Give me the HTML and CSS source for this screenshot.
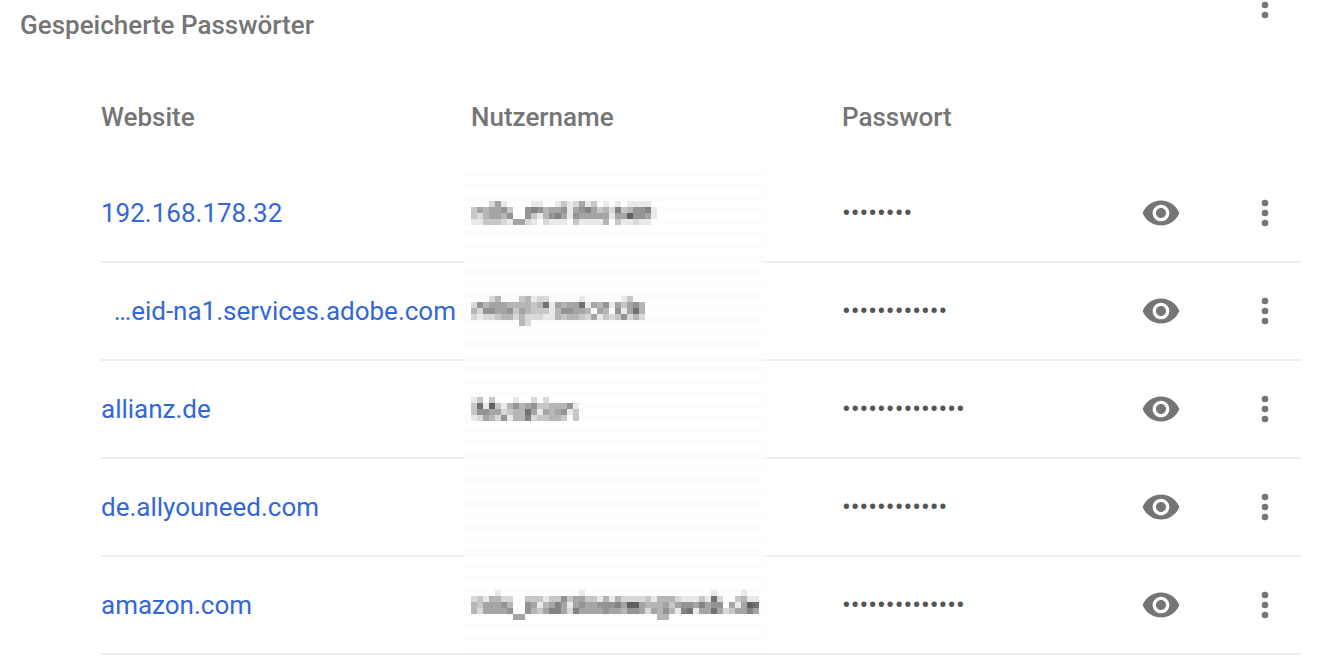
FILE: index.html
```html
<!DOCTYPE html>
<html lang="de">
<head>
<meta charset="utf-8">
<meta name="viewport" content="width=device-width, initial-scale=1">
<title>Gespeicherte Passwörter</title>
<link rel="stylesheet" href="styles.css">
</head>
<body>
<svg class="sprite" aria-hidden="true">
  <symbol id="eye" viewBox="0 0 24 24"><path d="M12 4.5C7 4.5 2.73 7.61 1 12c1.73 4.39 6 7.5 11 7.5s9.27-3.11 11-7.5c-1.73-4.39-6-7.5-11-7.5zM12 17c-2.76 0-5-2.24-5-5s2.24-5 5-5 5 2.24 5 5-2.24 5-5 5zm0-8c-1.66 0-3 1.34-3 3s1.34 3 3 3 3-1.34 3-3-1.34-3-3-3z"/></symbol>
  <symbol id="more" viewBox="0 0 24 24"><circle cx="12" cy="6" r="2"/><circle cx="12" cy="12" r="2"/><circle cx="12" cy="18" r="2"/></symbol>
</svg>
<main class="page">
  <header class="section-head">
    <h1 class="title">Gespeicherte Passwörter</h1>
    <button class="icon-button section-menu" type="button" aria-label="Weitere Aktionen"><svg class="icon"><use href="#more"/></svg></button>
  </header>
  <table class="passwords">
    <thead>
      <tr>
        <th class="site" scope="col">Website</th>
        <th class="user" scope="col">Nutzername</th>
        <th class="secret" scope="col">Passwort</th>
        <td class="show"></td>
        <td class="menu"></td>
      </tr>
    </thead>
    <tbody>
      <tr>
        <td class="site"><a class="link" href="#">192.168.178.32</a></td>
        <td class="user"><svg class="mosaic" role="img" aria-label="Unkenntlich gemacht" data-rows="0002510000110013125130101011110 3545563006764556156753427346671 3245546006314675165555515596651 1133321552102111031111403112110"></svg></td>
        <td class="secret"><input class="field" type="password" aria-label="Passwort" value="********" readonly></td>
        <td class="show"><button class="icon-button" type="button" aria-label="Passwort anzeigen"><svg class="icon"><use href="#eye"/></svg></button></td>
        <td class="menu"><button class="icon-button" type="button" aria-label="Weitere Aktionen"><svg class="icon"><use href="#more"/></svg></button></td>
      </tr>
      <tr>
        <td class="site site-long"><a class="link" href="#">…eid-na1.services.adobe.com</a></td>
        <td class="user"><svg class="mosaic" role="img" aria-label="Unkenntlich gemacht" data-rows="00024000341220000010000001300 26455544443481545581546153564 42665563543331466554054061584 21223442422211434432513236242 00000000420000000000000000000"></svg></td>
        <td class="secret"><input class="field" type="password" aria-label="Passwort" value="************" readonly></td>
        <td class="show"><button class="icon-button" type="button" aria-label="Passwort anzeigen"><svg class="icon"><use href="#eye"/></svg></button></td>
        <td class="menu"><button class="icon-button" type="button" aria-label="Weitere Aktionen"><svg class="icon"><use href="#more"/></svg></button></td>
      </tr>
      <tr>
        <td class="site"><a class="link" href="#">allianz.de</a></td>
        <td class="user"><svg class="mosaic" role="img" aria-label="Unkenntlich gemacht" data-rows="130300010020200000 381931464563344461 366552344851545613 125426144723344303"></svg></td>
        <td class="secret"><input class="field" type="password" aria-label="Passwort" value="**************" readonly></td>
        <td class="show"><button class="icon-button" type="button" aria-label="Passwort anzeigen"><svg class="icon"><use href="#eye"/></svg></button></td>
        <td class="menu"><button class="icon-button" type="button" aria-label="Weitere Aktionen"><svg class="icon"><use href="#more"/></svg></button></td>
      </tr>
      <tr>
        <td class="site"><a class="link" href="#">de.allyouneed.com</a></td>
        <td class="user"></td>
        <td class="secret"><input class="field" type="password" aria-label="Passwort" value="************" readonly></td>
        <td class="show"><button class="icon-button" type="button" aria-label="Passwort anzeigen"><svg class="icon"><use href="#eye"/></svg></button></td>
        <td class="menu"><button class="icon-button" type="button" aria-label="Weitere Aktionen"><svg class="icon"><use href="#more"/></svg></button></td>
      </tr>
      <tr>
        <td class="site"><a class="link" href="#">amazon.com</a></td>
        <td class="user"><svg class="mosaic" role="img" aria-label="Unkenntlich gemacht" data-rows="000010000000000000100000000000000000000010000100 231442200333133635533141422223144421113182003411 435556400651457515655666759954445356657566051598 425555600643577527555565546652546417815585235575 000000055000000000000000000000044000000000000000"></svg></td>
        <td class="secret"><input class="field" type="password" aria-label="Passwort" value="**************" readonly></td>
        <td class="show"><button class="icon-button" type="button" aria-label="Passwort anzeigen"><svg class="icon"><use href="#eye"/></svg></button></td>
        <td class="menu"><button class="icon-button" type="button" aria-label="Weitere Aktionen"><svg class="icon"><use href="#more"/></svg></button></td>
      </tr>
    </tbody>
  </table>
</main>
<script src="mosaic.js"></script>
</body>
</html>
```

FILE: styles.css
```css
* {
  box-sizing: border-box;
}

body {
  margin: 0;
  background: #fff;
  color: #757575;
  font-family: Roboto, "Noto Sans", sans-serif;
  font-size: 26px;
  line-height: 30px;
  overflow: hidden;
}

.sprite {
  display: none;
}

.page {
  padding: 0 28px 0 20px;
}

.section-head {
  display: flex;
  justify-content: space-between;
  align-items: flex-start;
  height: 69px;
  padding-right: 16px;
}

.title {
  margin: 10px 0 0;
  font-size: 26px;
  font-weight: 500;
}

/* The section is scrolled, so its menu is partly above the top edge. */
.section-menu {
  margin-top: -15px;
}

.passwords {
  width: calc(100% - 81px);
  margin-left: 81px;
  border-collapse: separate;
  border-spacing: 0;
  table-layout: fixed;
}

.passwords th,
.passwords td {
  height: 96px;
  padding: 0;
  text-align: left;
  vertical-align: middle;
  font-weight: 500;
}

.passwords tbody td {
  height: 98px;
  border-bottom: 2px solid #eee;
  font-weight: 400;
}

.passwords .site {
  width: 363px;
}

.passwords .site-long {
  padding-right: 8px;
  text-align: right;
}

.passwords .user {
  width: 302px;
  padding-left: 7px;
}

.passwords tbody .user {
  background: repeating-linear-gradient(#fff 0 6px, #fdfdfd 6px 12px);
  border-bottom-color: #fafafa;
}

.passwords tbody tr:last-child .user {
  border-bottom-color: #eee;
}

.passwords .secret {
  padding-left: 76px;
}

.passwords .show {
  width: 104px;
}

.passwords .menu {
  width: 56px;
}

.link {
  color: #3367d6;
  text-decoration: none;
}

.field {
  display: block;
  width: 100%;
  padding: 0;
  border: 0;
  outline: 0;
  background: transparent;
  color: #555;
  font: inherit;
}

.icon-button {
  display: block;
  width: 40px;
  height: 40px;
  padding: 0;
  border: 0;
  background: transparent;
  color: #757575;
}

.icon {
  display: block;
  width: 40px;
  height: 40px;
  fill: currentColor;
}

.mosaic {
  display: block;
}
```

FILE: mosaic.js
```js
// Draws each obscured name as square grey cells; a digit is a cell's darkness.
const CELL = 6;

document.querySelectorAll(".mosaic").forEach((svg) => {
  const rows = svg.dataset.rows.split(" ");
  svg.setAttribute("width", rows[0].length * CELL);
  svg.setAttribute("height", rows.length * CELL);
  rows.forEach((row, y) => {
    [...row].forEach((digit, x) => {
      if (digit === "0") return;
      const grey = 250 - Number(digit) * 17;
      const rect = document.createElementNS("http://www.w3.org/2000/svg", "rect");
      rect.setAttribute("x", x * CELL);
      rect.setAttribute("y", y * CELL);
      rect.setAttribute("width", CELL);
      rect.setAttribute("height", CELL);
      rect.setAttribute("fill", `rgb(${grey},${grey},${grey})`);
      svg.append(rect);
    });
  });
});
```
